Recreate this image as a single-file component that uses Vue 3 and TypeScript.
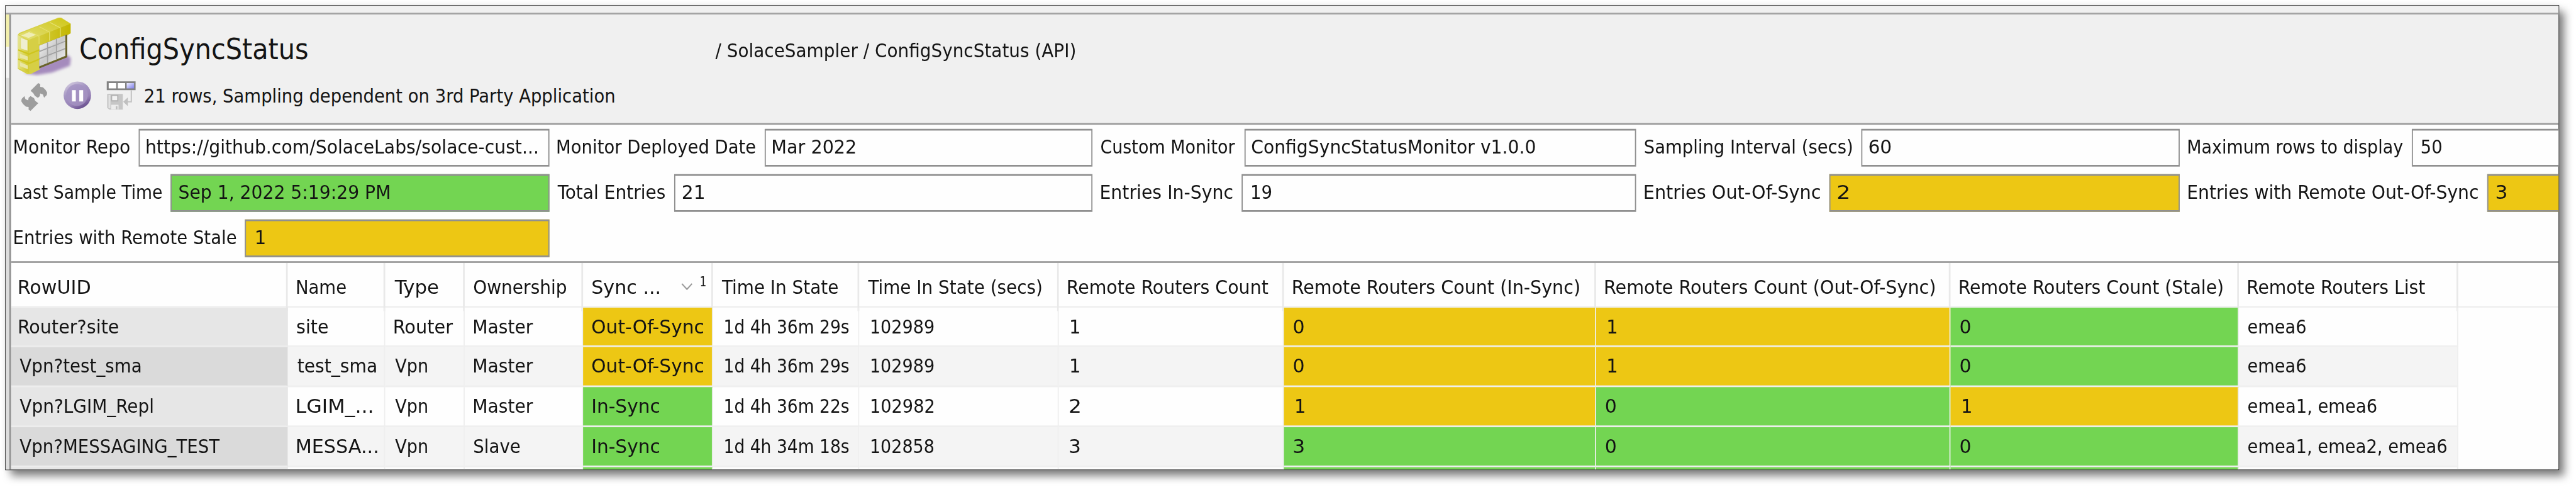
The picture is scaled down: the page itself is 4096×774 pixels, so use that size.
<script setup lang="ts">
import type { ObjectDirective } from 'vue'

type Tone = 'plain' | 'green' | 'amber'
interface Label { text: string; width: number; shift?: number }
interface Field { label: Label; value: Label; tone: Tone }
interface Cell extends Label { tone?: Tone }

const FAMILY = '"DejaVu Sans Condensed", "DejaVu Sans", sans-serif'

/* Fits a one-line text to the given drawn width, starting at its left edge. */
const vFit: ObjectDirective<HTMLElement, Label> = {
  mounted(el, { value }) {
    const size = el.dataset.size === 'title' ? 49.4 : el.dataset.size === 'tiny' ? 22 : 33.6
    const ctx = document.createElement('canvas').getContext('2d')
    if (!ctx) return
    ctx.font = `100px ${FAMILY}`
    const m = ctx.measureText(value.text)
    const left = (-m.actualBoundingBoxLeft * size) / 100
    const ink = ((m.actualBoundingBoxRight + m.actualBoundingBoxLeft) * size) / 100
    const k = value.width / ink
    el.style.width = `${value.width}px`
    el.style.marginLeft = `${value.shift ?? 0}px`
    el.style.transform = `translateX(${-left * k}px) scaleX(${k})`
  },
}

const t = (text: string, width: number, shift = 0): Label => ({ text, width, shift })
const c = (text: string, width: number, shift = 0, tone: Tone = 'plain'): Cell => ({ text, width, shift, tone })

const title = t('ConfigSyncStatus', 391)
const path = t('/ SolaceSampler / ConfigSyncStatus (API)', 620)
const status = t('21 rows, Sampling dependent on 3rd Party Application', 809)

const fields: Field[] = [
  { label: t('Monitor Repo', 198.5), value: t('https://github.com/SolaceLabs/solace-cust...', 673), tone: 'plain' },
  { label: t('Monitor Deployed Date', 341), value: t('Mar 2022', 142), tone: 'plain' },
  { label: t('Custom Monitor', 231), value: t('ConfigSyncStatusMonitor v1.0.0', 488, -1), tone: 'plain' },
  { label: t('Sampling Interval (secs)', 357), value: t('60', 37), tone: 'plain' },
  { label: t('Maximum rows to display', 369.5), value: t('50', 34, 2), tone: 'plain' },
  { label: t('Last Sample Time', 254), value: t('Sep 1, 2022 5:19:29 PM', 362), tone: 'green' },
  { label: t('Total Entries', 185), value: t('21', 36, 1), tone: 'plain' },
  { label: t('Entries In-Sync', 226), value: t('19', 33, 4), tone: 'plain' },
  { label: t('Entries Out-Of-Sync', 302), value: t('2', 18, 1), tone: 'amber' },
  { label: t('Entries with Remote Out-Of-Sync', 499), value: t('3', 17, 2), tone: 'amber' },
  { label: t('Entries with Remote Stale', 382), value: t('1', 14, 5), tone: 'amber' },
]

const columns: Label[] = [
  t('RowUID', 122), t('Name', 84), t('Type', 75), t('Ownership', 159), t('Sync ...', 115),
  t('Time In State', 200, -1), t('Time In State (secs)', 299, -1), t('Remote Routers Count', 345),
  t('Remote Routers Count (In-Sync)', 493), t('Remote Routers Count (Out-Of-Sync)', 568),
  t('Remote Routers Count (Stale)', 453), t('Remote Routers List', 305),
]

const zero = (tone: Tone) => c('0', 17, 1, tone)
const one = (tone: Tone) => c('1', 14, 5, tone)

const rows: Cell[][] = [
  [c('Router?site', 171), c('site', 53), c('Router', 101), c('Master', 102), c('Out-Of-Sync', 191, 0, 'amber'),
    c('1d 4h 36m 29s', 213, 5), c('102989', 107, 5), one('plain'), zero('amber'), one('amber'), zero('green'), c('emea6', 99)],
  [c('Vpn?test_sma', 208, 1), c('test_sma', 135, 1), c('Vpn', 55, 1), c('Master', 102), c('Out-Of-Sync', 191, 0, 'amber'),
    c('1d 4h 36m 29s', 213, 5), c('102989', 107, 5), one('plain'), zero('amber'), one('amber'), zero('green'), c('emea6', 99)],
  [c('Vpn?LGIM_Repl', 229, 1), c('LGIM_...', 129), c('Vpn', 55, 1), c('Master', 102), c('In-Sync', 114, 1, 'green'),
    c('1d 4h 36m 22s', 213, 5), c('102982', 107, 5), c('2', 17, 3), one('amber'), zero('green'), one('amber'), c('emea1, emea6', 221)],
  [c('Vpn?MESSAGING_TEST', 345, 1), c('MESSA...', 138), c('Vpn', 55, 1), c('Slave', 79), c('In-Sync', 114, 1, 'green'),
    c('1d 4h 34m 18s', 213, 5), c('102858', 107, 5), c('3', 17, 3), c('3', 17, 1, 'green'), zero('green'), zero('green'), c('emea1, emea2, emea6', 342)],
]
const partialRow: Tone[] = ['plain', 'plain', 'plain', 'plain', 'green', 'plain', 'plain', 'plain', 'green', 'green', 'green', 'plain']
</script>

<template>
  <div class="viewport">
    <div class="stage">
      <div class="window">
        <div class="strip"></div>
        <div class="body">
          <div class="gutter">
            <i class="g-yellow"></i><i class="g-white"></i><i class="g-grey"></i>
          </div>
          <main class="main">
            <header class="head">
              <div class="head-top">
                <svg class="ico-table" viewBox="84 84 294 312">
                  <defs>
                    <linearGradient id="front" x1="0" y1="0" x2="1" y2="0.3">
                      <stop offset="0" stop-color="#e6e596" /><stop offset="1" stop-color="#d3cb33" />
                    </linearGradient>
                    <linearGradient id="top" x1="0" y1="1" x2="1" y2="0">
                      <stop offset="0" stop-color="#e3e07c" /><stop offset="1" stop-color="#cfc614" />
                    </linearGradient>
                    <linearGradient id="side" x1="0" y1="0" x2="1" y2="0">
                      <stop offset="0" stop-color="#d9d34c" /><stop offset="1" stop-color="#c3b600" />
                    </linearGradient>
                    <linearGradient id="sheet" x1="0" y1="0" x2="1" y2="1">
                      <stop offset="0" stop-color="#ffffff" /><stop offset="0.5" stop-color="#c9c9c9" /><stop offset="1" stop-color="#f5f5f5" />
                    </linearGradient>
                    <filter id="soft" x="-20%" y="-20%" width="140%" height="140%"><feGaussianBlur stdDeviation="7" /></filter>
                  </defs>
                  <path d="M125 378 L205 340 L350 285 L366 300 L362 340 L270 375 L190 388 Z" fill="#a58bbd" filter="url(#soft)" />
                  <path d="M92 180 L100 170 L300 92 L318 92 L365 122 V172 L348 184 L202 240 V352 L208 358 L160 382 L142 384 L92 356 Z" fill="#d6d046" />
                  <path d="M96 178 L310 91 L365 122 L150 208 Z" fill="url(#top)" />
                  <path d="M150 208 L365 122 V172 L202 236 L150 250 Z" fill="url(#side)" />
                  <path d="M94 182 L150 206 V378 L94 352 Z" fill="url(#front)" />
                  <path d="M150 206 L200 186 V352 L208 358 L150 378 Z" fill="#d6cf45" />
                  <path d="M203 236 L348 178 V296 L203 354 Z" fill="#69632a" />
                  <path d="M203 236 L338 182 V289 L203 343 Z" fill="url(#sheet)" />
                  <path d="M246 219 V325 M292 201 V307 M203 266 L338 213 M203 304 L338 251" stroke="#a3a3a3" stroke-width="6" fill="none" />
                  <path d="M108 196 L142 208 V262 L108 250 Z" fill="#efeed0" />
                  <path d="M104 278 L144 292 V312 L104 298 Z M104 322 L144 338 V358 L104 342 Z" fill="#e9e6a4" />
                  <path d="M94 258 L150 280 L204 258 M94 306 L150 328 L204 306" fill="none" stroke="#cfc51d" stroke-width="7" />
                  <path d="M202 188 V228 M256 166 V210 M312 144 V190 M202 188 L150 160 M256 166 L204 138 M312 144 L258 116" fill="none" stroke="#e5e170" stroke-width="4" />
                  <path d="M110 184 L150 166 L186 180 L148 196 Z" fill="#efedb4" />
                </svg>
                <h1 v-fit="title" class="txt title" data-size="title">{{ title.text }}</h1>
                <div class="path">
                  <span v-fit="path" class="txt">{{ path.text }}</span>
                </div>
              </div>
              <div class="head-bottom">
                <svg class="ico-refresh" viewBox="105 425 145 150">
                  <g fill="#9d9d9d">
                    <path d="M158 468 L198 428 L208 434 V448 L222 450 L236 464 L244 478 L242 490 L228 504 L222 488 L208 482 L206 496 L196 505 L180 494 L172 480 Z" />
                    <path d="M198 532 L158 572 L148 566 V552 L134 550 L118 536 L110 522 L112 510 L126 496 L132 512 L146 518 L148 504 L158 496 L176 506 L182 520 Z" />
                  </g>
                </svg>
                <svg class="ico-pause" viewBox="325 418 152 152">
                  <defs>
                    <linearGradient id="ball" x1="0.2" y1="0" x2="0.75" y2="1">
                      <stop offset="0" stop-color="#d5cde0" /><stop offset="0.35" stop-color="#a596c3" /><stop offset="0.7" stop-color="#9883b7" /><stop offset="1" stop-color="#604586" />
                    </linearGradient>
                    <linearGradient id="core" x1="0" y1="0" x2="0.8" y2="1">
                      <stop offset="0" stop-color="#a08fc2" /><stop offset="1" stop-color="#a896c3" />
                    </linearGradient>
                  </defs>
                  <circle cx="401" cy="493" r="71" fill="url(#ball)" />
                  <circle cx="399" cy="492" r="56" fill="url(#core)" opacity="0.75" />
                  <path d="M373 467 H393 V525 H373 Z M411 467 H431 V525 H411 Z" fill="#fff" />
                </svg>
                <svg class="ico-save" viewBox="550 418 155 155">
                  <defs>
                    <linearGradient id="blue" x1="0" y1="0" x2="1" y2="1">
                      <stop offset="0" stop-color="#f0f0ff" /><stop offset="1" stop-color="#7f7fea" />
                    </linearGradient>
                  </defs>
                  <path d="M553 421 H702 V467 H553 Z" fill="#828282" />
                  <path d="M563 430 H602 V458 H563 Z M610 430 H648 V458 H610 Z" fill="#fff" />
                  <path d="M656 430 H694 V458 H656 Z" fill="url(#blue)" />
                  <path d="M680 467 V527 H650" fill="none" stroke="#c4c4c4" stroke-width="7" />
                  <path d="M638 527 L662 504 V550 Z" fill="#c0c0c0" />
                  <path d="M555 486 H636 V568 H566 L555 558 Z" fill="#c6c6c6" />
                  <path d="M562 492 H572 V560 H562 Z" fill="#e2e2e2" />
                  <path d="M578 494 H610 V522 H578 Z" fill="#f2f2f2" stroke="#b2b2b2" stroke-width="6" />
                  <path d="M576 542 H614 V566 H576 Z" fill="#ececec" />
                  <path d="M600 550 H608 V566 H600 Z" fill="#bdbdbd" />
                </svg>
                <span v-fit="status" class="txt status">{{ status.text }}</span>
              </div>
            </header>

            <section class="fields">
              <div v-for="f in fields" :key="f.label.text" class="field">
                <span v-fit="f.label" class="txt">{{ f.label.text }}</span>
                <div class="box" :class="f.tone">
                  <span v-fit="f.value" class="txt">{{ f.value.text }}</span>
                </div>
              </div>
            </section>

            <section class="table">
              <div class="row header">
                <div v-for="(col, i) in columns" :key="col.text" class="th">
                  <span v-fit="col" class="txt">{{ col.text }}</span>
                  <template v-if="i === 4">
                    <svg class="chevron" viewBox="0 0 24 16"><path d="M2 2 L12 13 L22 2" fill="none" stroke="#9a9a9a" stroke-width="2.6" /></svg>
                    <span v-fit="t('1', 8, 12)" class="txt order" data-size="tiny">1</span>
                  </template>
                </div>
              </div>
              <div v-for="(row, r) in rows" :key="r" class="row data" :class="{ alt: r % 2 === 1 }">
                <div v-for="(cell, i) in row" :key="i" class="td" :class="cell.tone">
                  <span v-fit="cell" class="txt">{{ cell.text }}</span>
                </div>
              </div>
              <div class="row data partial">
                <div v-for="(tone, i) in partialRow" :key="i" class="td" :class="tone"></div>
              </div>
            </section>
          </main>
        </div>
      </div>
    </div>
  </div>
</template>

<style>
html, body { margin: 0; background: #fff; overflow: hidden; }
</style>

<style scoped>
* { box-sizing: border-box; }
.viewport { width: 4096px; height: 774px; overflow: hidden; background: #fff; }
.stage {
  width: 4440px; height: 839px; padding: 9px 0 0 9px;
  transform: scale(0.92252); transform-origin: 0 0;
  font-family: "DejaVu Sans Condensed", "DejaVu Sans", sans-serif;
  font-size: 33.6px; color: #141414;
}
.window {
  width: 4402px; height: 801px; border: 1.1px solid #000; background: #fefefe;
  display: flex; flex-direction: column;
  box-shadow: 9px 11px 14px rgba(0, 0, 0, 0.5), 0 0 12px rgba(0, 0, 0, 0.08);
}
.strip { flex: none; height: 15px; background: #f0f0f0; border-bottom: 3px solid #a3a3a3; }
.body { flex: 1; min-height: 0; display: flex; }
.gutter { flex: none; width: 6px; display: flex; flex-direction: column; }
.g-yellow { height: 56px; background: #f3f0ac; }
.g-white { height: 53px; background: #f4f4f4; }
.g-grey { flex: 1; background: #dcdcdc; }
.main { flex: 1; min-width: 0; border-left: 3px solid #8f8f8f; overflow: hidden; display: flex; flex-direction: column; }
.txt { display: block; flex: none; white-space: nowrap; transform-origin: 0 50%; }

.head { flex: none; height: 190px; background: #f0f0f0; border-bottom: 3px solid #9c9c9c; }
.head-top { display: flex; height: 112px; padding-left: 9px; }
.ico-table { flex: none; width: 98px; height: 104px; margin: 3px 13px 0 0; }
.title { line-height: 76px; font-size: 49.4px; font-weight: 400; margin: 22px 0 0; }
.path { line-height: 60px; margin: 33px 0 0 703px; }
.head-bottom { display: flex; align-items: flex-start; padding-left: 16px; height: 75px; }
.ico-refresh { flex: none; width: 48.3px; height: 50px; margin: 4.7px 25px 0 0; }
.ico-pause { flex: none; width: 50.7px; height: 50.7px; margin: 2.3px 24.3px 0 0; }
.ico-save { flex: none; width: 51.7px; height: 51.7px; margin: 2.3px 15px 0 0; }
.status { line-height: 58px; }

.fields {
  flex: none; height: 237.5px; padding: 6.5px 0 0 5.5px; border-bottom: 3px solid #9c9c9c;
  display: grid; grid-template-columns: repeat(5, 922px); grid-auto-rows: 65.5px; gap: 12.5px 14.9px;
}
.field { display: flex; gap: 15.5px; line-height: 64px; }
.box { flex: 1; min-width: 0; border: 3px solid #909090; border-left-width: 2.4px; border-right-width: 2.4px; padding-left: 12.5px; line-height: 58px; background: #fefefe; }
.green { background: #73d552; }
.amber { background: #edc714; }

.row {
  display: grid;
  grid-template-columns: 477px 168px 137px 203.5px 224.5px 252px 344px 387.5px 538px 611.5px 496.5px 378px 1fr;
}
.header { height: 77px; border-bottom: 3px solid #f0f0f0; line-height: 83px; }
.th { border-right: 3px solid #e9e9e9; padding-left: 16px; display: flex; }
.th:first-child, .td:first-child { padding-left: 14px; }
.chevron { flex: none; width: 24px; height: 14px; margin: 34px 0 0 36px; }
.order { font-size: 22px; line-height: 66px; }
.data { height: 68.75px; line-height: 66px; }
.td { border-right: 2.4px solid #efefef; border-bottom: 3px solid #efefef; padding-left: 16px; overflow: hidden; }
.td:first-child { background: #e6e6e6; border-bottom-color: #ededed; border-right-color: #e6e6e6; }
.alt .td:first-child { background: #dadada; border-right-color: #dadada; }
.alt .plain { background: #f4f4f4; }
.partial { height: 5px; }
.partial .td { border-bottom: 0; }
.table { flex: 1; min-height: 0; overflow: hidden; }
</style>
